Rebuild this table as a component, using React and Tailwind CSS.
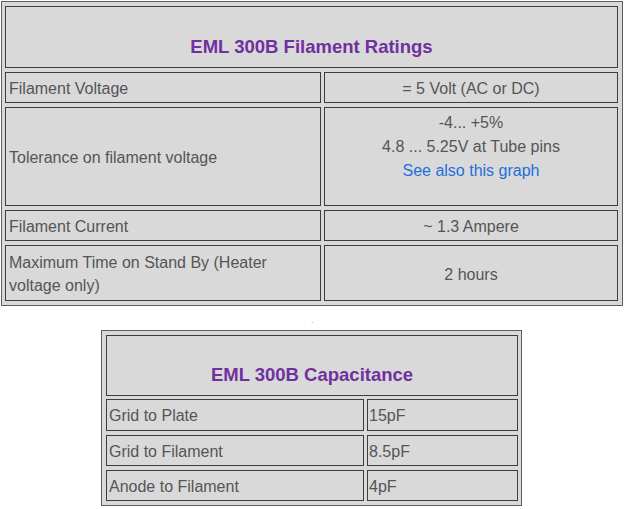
import React from 'react';

const ratings = [
  { label: 'Filament Voltage', value: ['= 5 Volt (AC or DC)'], h: 'h-[31px]' },
  { label: 'Tolerance on filament voltage', value: ['-4... +5%', '4.8 ... 5.25V at Tube pins'], link: 'See also this graph', h: 'h-[99px]' },
  { label: 'Filament Current', value: ['~ 1.3 Ampere'], h: 'h-[31px]' },
  { label: 'Maximum Time on Stand By (Heater voltage only)', value: ['2 hours'], h: 'h-[56px]' },
];

const capacitance = [
  { label: 'Grid to Plate', value: '15pF', h: 'h-[32px]' },
  { label: 'Grid to Filament', value: '8.5pF', h: 'h-[31px]' },
  { label: 'Anode to Filament', value: '4pF', h: 'h-[31px]' },
];

const cell = 'border border-[#3d3d3d] bg-[#d9d9d9]';

const App = () => {
  return (
    <div className="min-h-screen bg-white pt-[1px] pl-[1px] text-[16px] text-[#555555]" style={{ fontFamily: '"Liberation Sans", Arial, sans-serif' }}>
      {/* filament ratings */}
      <div className="w-[622px] border border-[#5e5e5e] bg-[#d9d9d9] pt-[4px] pb-[4px] pl-[3px] pr-[4px]">
        <div className="grid grid-cols-[316px_294px] gap-x-[3px] gap-y-[4px]">
          <div className={`${cell} col-span-2 h-[62px] pt-[29px] text-center text-[18.5px] font-bold leading-[21px] text-[#7030a0]`}>
            EML 300B Filament Ratings
          </div>
          {ratings.map((r, idx) => (
            <React.Fragment key={idx}>
              <div className={`${cell} ${r.h} flex items-center pl-[3px] pt-[2px] leading-[23px]`}>
                {r.label}
              </div>
              {r.link ? (
                <div className={`${cell} ${r.h} pt-[3px] text-center leading-[24px]`}>
                  {r.value.map((v, i) => (
                    <div key={i}>{v}</div>
                  ))}
                  <a href="#" className="text-[#1f6fdc]">{r.link}</a>
                </div>
              ) : (
                <div className={`${cell} ${r.h} flex items-center justify-center pt-[2px] text-center leading-[23px]`}>
                  {r.value[0]}
                </div>
              )}
            </React.Fragment>
          ))}
        </div>
      </div>

      <div className="h-[24px] w-[622px] pt-[11px] text-center text-[8px] leading-[8px] text-[#777777]">.</div>

      {/* capacitance */}
      <div className="ml-[100px] w-[421px] border border-[#5e5e5e] bg-[#d9d9d9] pt-[4px] pb-[4px] pl-[4px] pr-[3px]">
        <div className="grid grid-cols-[258px_151px] gap-x-[3px] gap-y-[4px]">
          <div className={`${cell} col-span-2 mb-[-1px] h-[61px] pt-[28px] text-center text-[18.5px] font-bold leading-[21px] text-[#7030a0]`}>
            EML 300B Capacitance
          </div>
          {capacitance.map((r, idx) => (
            <React.Fragment key={idx}>
              <div className={`${cell} ${r.h} flex items-center pl-[2px] pt-[2px]`}>{r.label}</div>
              <div className={`${cell} ${r.h} flex items-center pl-[1px] pt-[2px]`}>{r.value}</div>
            </React.Fragment>
          ))}
        </div>
      </div>
    </div>
  );
};

export default App;
